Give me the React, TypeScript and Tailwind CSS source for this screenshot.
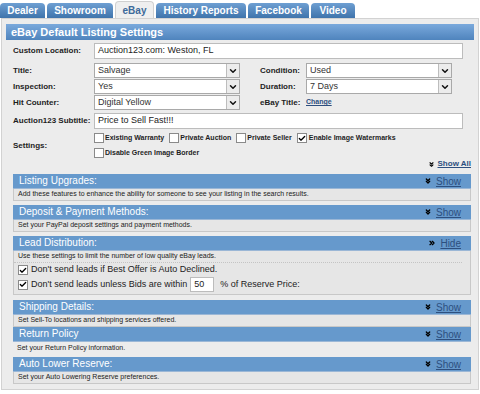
import { ChevronsDown, ChevronsRight, ChevronDown, Check } from 'lucide-react';

const tabs = [
  { label: 'Dealer', w: 'w-[45px]' },
  { label: 'Showroom', w: 'w-[66px]' },
  { label: 'eBay', w: 'w-[39px]', active: true },
  { label: 'History Reports', w: 'w-[90px]' },
  { label: 'Facebook', w: 'w-[61px]' },
  { label: 'Video', w: 'w-[44px]' },
];

function Box({ checked }: { checked?: boolean }) {
  return (
    <span className="w-[10px] h-[10px] bg-white border border-[#8a8a8a] flex items-center justify-center shrink-0">
      {checked && <Check className="w-[9px] h-[9px] text-black" strokeWidth={4} />}
    </span>
  );
}

function Select({ value, w }: { value: string; w: string }) {
  return (
    <div className={`${w} h-[15px] bg-white border border-[#a9a9a9] flex items-center`}>
      <span className="flex-1 pl-[3px] text-[9px] font-normal text-[#333] leading-none">{value}</span>
      <span className="w-[13px] h-[13px] bg-[#ececec] border-l border-[#bdbdbd] flex items-center justify-center">
        <ChevronDown className="w-[10px] h-[10px] text-[#111]" strokeWidth={3.5} />
      </span>
    </div>
  );
}

function Toggle({ open }: { open?: boolean }) {
  return (
    <span className="flex items-center gap-[4px]">
      {open ? (
        <ChevronsRight className="w-[8px] h-[8px] text-black" strokeWidth={4} />
      ) : (
        <ChevronsDown className="w-[8px] h-[8px] text-black" strokeWidth={4} />
      )}
      <span className="text-[10px] underline text-[#2d4f7f]">{open ? 'Hide' : 'Show'}</span>
    </span>
  );
}

function SectionHead({ title, open }: { title: string; open?: boolean }) {
  return (
    <div className="h-[15px] bg-[#6699cc] border-b border-[#9bb7d6] flex items-center justify-between pl-[6px] pr-[10px]">
      <span className="text-[10px] text-white leading-none">{title}</span>
      <Toggle open={open} />
    </div>
  );
}

function Section({ title, desc, noBorder }: { title: string; desc: string; noBorder?: boolean }) {
  return (
    <div>
      <SectionHead title={title} />
      <div
        className={`h-[12px] flex items-center pl-[4px] text-[7px] text-[#222] ${
          noBorder ? '' : 'bg-[#e6e6e6] border border-t-0 border-[#c8c8c8]'
        }`}
      >
        {desc}
      </div>
    </div>
  );
}

export default function App() {
  return (
    <div className="w-[480px] h-[394px] bg-white font-['Liberation_Sans',Arial,sans-serif] overflow-hidden">
      {/* Tabs */}
      <div className="flex items-end h-[18px] gap-[2px]">
        {tabs.map((t) => (
          <div
            key={t.label}
            className={`${t.w} rounded-t-[4px] flex items-center justify-center text-[10px] font-bold ${
              t.active
                ? 'h-[17px] bg-[#efefef] text-[#3d6a9a] border border-b-0 border-[#d0d0d0]'
                : 'h-[15px] bg-gradient-to-b from-[#6e9fd2] to-[#3f74ac] text-white'
            }`}
          >
            {t.label}
          </div>
        ))}
      </div>

      {/* Panel */}
      <div className="w-[478px] h-[372px] ml-[1px] bg-[#ececec] border border-[#d2d2d2] px-[4px] pt-[5px]">
        <div className="h-[16px] bg-gradient-to-b from-[#7aa9dc] to-[#4f84bd] flex items-center pl-[5px] text-[11px] font-bold text-white">
          eBay Default Listing Settings
        </div>

        <div className="pl-[7px] pr-[11px] text-[8px] font-bold text-[#1e1e1e]">
          <div className="flex items-center mt-[3px] h-[16px]">
            <span className="w-[81px]">Custom Location:</span>
            <div className="flex-1 h-[16px] bg-white border border-[#bcbcbc] flex items-center pl-[3px] text-[9px] font-normal text-[#222]">
              Auction123.com: Weston, FL
            </div>
          </div>

          <div className="flex mt-[4px]">
            <div className="flex flex-col gap-[1px]">
              <div className="flex items-center h-[15px]">
                <span className="w-[81px]">Title:</span>
                <Select value="Salvage" w="w-[146px]" />
              </div>
              <div className="flex items-center h-[15px]">
                <span className="w-[81px]">Inspection:</span>
                <Select value="Yes" w="w-[146px]" />
              </div>
              <div className="flex items-center h-[15px]">
                <span className="w-[81px]">Hit Counter:</span>
                <Select value="Digital Yellow" w="w-[146px]" />
              </div>
            </div>
            <div className="flex flex-col gap-[1px] ml-[20px]">
              <div className="flex items-center h-[15px]">
                <span className="w-[46px]">Condition:</span>
                <Select value="Used" w="w-[146px]" />
              </div>
              <div className="flex items-center h-[15px]">
                <span className="w-[46px]">Duration:</span>
                <Select value="7 Days" w="w-[146px]" />
              </div>
              <div className="flex items-center h-[15px]">
                <span className="w-[46px]">eBay Title:</span>
                <span className="text-[7px] underline text-[#2d4f7f]">Change</span>
              </div>
            </div>
          </div>

          <div className="flex items-center mt-[3px] h-[16px]">
            <span className="w-[81px]">Auction123 Subtitle:</span>
            <div className="flex-1 h-[16px] bg-white border border-[#bcbcbc] flex items-center pl-[3px] text-[9px] font-normal text-[#222]">
              Price to Sell Fast!!!
            </div>
          </div>

          <div className="flex items-center mt-[4px]">
            <span className="w-[81px]">Settings:</span>
            <div className="flex flex-col gap-[4px] text-[7px]">
              <div className="flex items-center gap-[5px]">
                <span className="flex items-center gap-[1px]"><Box />Existing Warranty</span>
                <span className="flex items-center gap-[1px]"><Box />Private Auction</span>
                <span className="flex items-center gap-[1px]"><Box />Private Seller</span>
                <span className="flex items-center gap-[2px]"><Box checked />Enable Image Watermarks</span>
              </div>
              <div className="flex items-center gap-[1px]">
                <Box />Disable Green Image Border
              </div>
            </div>
          </div>

          <div className="flex justify-end items-center gap-[3px] mr-[-8px] text-[8px]">
            <ChevronsDown className="w-[7px] h-[7px] text-black" strokeWidth={4} />
            <span className="underline text-[#2d4f7f]">Show All</span>
          </div>
        </div>

        {/* Sections */}
        <div className="pl-[7px] pr-[3px] mt-[4px] flex flex-col">
          <Section
            title="Listing Upgrades:"
            desc="Add these features to enhance the ability for someone to see your listing in the search results."
          />
          <div className="mt-[4px]">
            <Section title="Deposit & Payment Methods:" desc="Set your PayPal deposit settings and payment methods." />
          </div>
          <div className="mt-[4px]">
            <SectionHead title="Lead Distribution:" open />
            <div className="bg-[#e6e6e6] border border-t-0 border-[#c8c8c8] pb-[2px]">
              <div className="h-[12px] flex items-center pl-[4px] text-[7px] text-[#222] border-b border-dotted border-[#c4c4c4] mr-[8px]">
                Use these settings to limit the number of low quality eBay leads.
              </div>
              <div className="flex items-center gap-[3px] pl-[4px] mt-[1px] h-[12px] text-[9px] text-[#222]">
                <Box checked />Don't send leads if Best Offer is Auto Declined.
              </div>
              <div className="flex items-center gap-[3px] pl-[4px] mt-[1px] h-[15px] text-[9px] text-[#222]">
                <Box checked />Don't send leads unless Bids are within
                <span className="w-[24px] h-[15px] bg-white border border-[#bcbcbc] flex items-center pl-[3px]">50</span>
                <span className="ml-[3px]">% of Reserve Price:</span>
              </div>
            </div>
          </div>
          <div className="mt-[5px]">
            <Section title="Shipping Details:" desc="Set Sell-To locations and shipping services offered." />
          </div>
          <Section title="Return Policy" desc="Set your Return Policy information." noBorder />
          <div className="mt-[3px]">
            <Section title="Auto Lower Reserve:" desc="Set your Auto Lowering Reserve preferences." />
          </div>
        </div>
      </div>
    </div>
  );
}
